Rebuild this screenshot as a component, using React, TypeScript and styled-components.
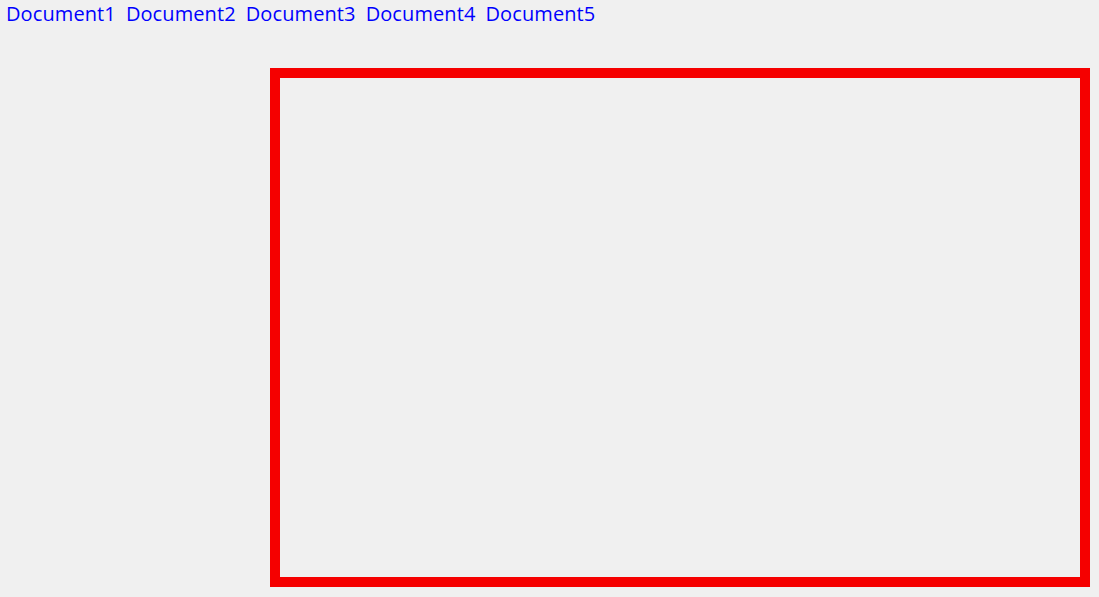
import React from "react";
import styled, { createGlobalStyle } from "styled-components";

const GlobalStyle = createGlobalStyle`
  html, body {
    margin: 0;
    padding: 0;
    background: #f0f0f0;
    font-family: "Open Sans", "Noto Sans", sans-serif;
  }
`;

const Page = styled.div`
  display: flex;
  flex-direction: column;
  height: 597px;
  box-sizing: border-box;
`;

const Nav = styled.nav`
  display: flex;
  gap: 10px;
  padding: 0 0 0 6px;
  height: 68px;
  box-sizing: border-box;
`;

const DocLink = styled.a`
  color: #0000ff;
  font-size: 20px;
  line-height: 28px;
  letter-spacing: 0.1px;
  text-decoration: none;
`;

const Frame = styled.div`
  margin-left: 270px;
  width: 820px;
  height: 519px;
  box-sizing: border-box;
  border: 10px solid #f50000;
`;

const docs = ["Document1", "Document2", "Document3", "Document4", "Document5"];

export default function App() {
  return (
    <>
      <GlobalStyle />
      <Page>
        <Nav>
          {docs.map((d) => (
            <DocLink key={d} href="#">
              {d}
            </DocLink>
          ))}
        </Nav>
        <Frame />
      </Page>
    </>
  );
}
